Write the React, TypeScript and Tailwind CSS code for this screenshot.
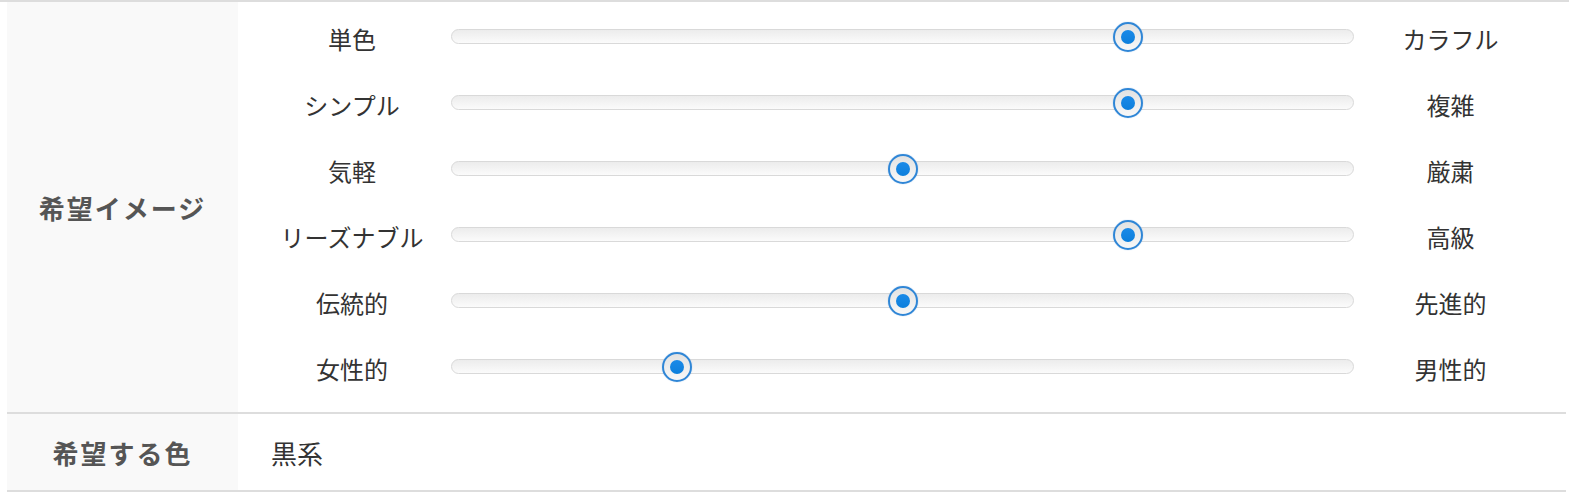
import React from "react";

const rows: { left: string; right: string; value: number }[] = [
  { left: "単色", right: "カラフル", value: 75 },
  { left: "シンプル", right: "複雑", value: 75 },
  { left: "気軽", right: "厳粛", value: 50 },
  { left: "リーズナブル", right: "高級", value: 75 },
  { left: "伝統的", right: "先進的", value: 50 },
  { left: "女性的", right: "男性的", value: 25 },
];

function Slider({ value }: { value: number }) {
  return (
    <div className="relative h-[15px] w-[903px] shrink-0 rounded-full border border-[#d9d9d9] bg-gradient-to-b from-[#ececec] to-[#fbfbfb]">
      <div
        className="absolute top-1/2 flex h-[30px] w-[30px] -translate-x-1/2 -translate-y-1/2 items-center justify-center rounded-full border-2 border-[#2f86d6] bg-gradient-to-b from-[#e2e2e2] to-[#f8f8f8] shadow-[0_0_1px_rgba(40,120,210,0.6)]"
        style={{ left: `${value}%` }}
      >
        <div className="h-[14px] w-[14px] rounded-full bg-gradient-to-b from-[#1a8ae8] to-[#0c7fdc]" />
      </div>
    </div>
  );
}

export default function App() {
  return (
    <div
      className="w-[1569px] bg-white text-[#333]"
      style={{ fontFamily: '"Noto Sans CJK JP", "Noto Sans", sans-serif' }}
    >
      <div className="h-[2px] w-full bg-[#dddddd]" />
      <div className="ml-[7px] w-[1559px]">
        <div className="flex border-b-2 border-[#dddddd]">
          <div className="flex w-[231px] shrink-0 items-center justify-center bg-[#f9f9f9] text-[26px] font-bold tracking-[2px] text-[#555]">
            希望イメージ
          </div>
          <div className="flex flex-1 flex-col pt-[4px] pb-[10px] pl-[22px]">
            {rows.map((r) => (
              <div key={r.left} className="flex h-[66px] items-center">
                <div className="w-[184px] shrink-0 text-center text-[24px] leading-none">
                  {r.left}
                </div>
                <div className="ml-[7px] -mt-[5px]">
                  <Slider value={r.value} />
                </div>
                <div className="w-[193px] shrink-0 text-center text-[24px] leading-none">
                  {r.right}
                </div>
              </div>
            ))}
          </div>
        </div>
        <div className="flex h-[78px] border-b-2 border-[#dddddd]">
          <div className="flex w-[231px] shrink-0 items-center justify-center bg-[#f9f9f9] text-[26px] font-bold tracking-[2px] text-[#555]">
            希望する色
          </div>
          <div className="flex flex-1 items-center pl-[33px] text-[26px]">黒系</div>
        </div>
      </div>
    </div>
  );
}
